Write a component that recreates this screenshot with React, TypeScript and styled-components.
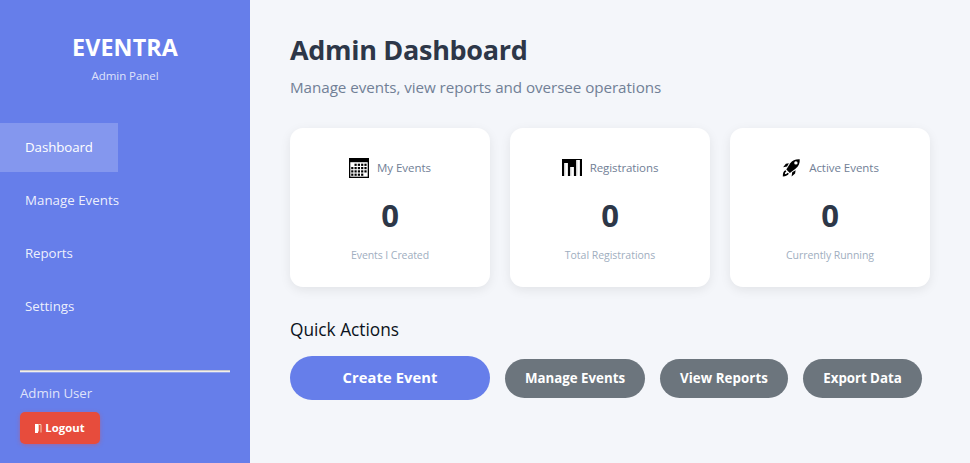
import React from "react";
import styled, { createGlobalStyle } from "styled-components";

const GlobalStyle = createGlobalStyle`
  * { box-sizing: border-box; }
  body {
    margin: 0;
    background: #f4f6fa;
    font-family: "Open Sans", "Noto Sans", sans-serif;
  }
  h1, h2, p { margin: 0; font-weight: 400; }
  button { font-family: inherit; border: 0; padding: 0; cursor: pointer; }
`;

const Page = styled.div`
  display: flex;
  height: 463px;
  overflow: hidden;
`;

const Sidebar = styled.aside`
  display: flex;
  flex-direction: column;
  flex: 0 0 250px;
  background: #667eea;
  color: #fff;
`;

const Brand = styled.header`
  padding-top: 31px;
  height: 123px;
  text-align: center;
`;

const BrandName = styled.h1`
  font-size: 23.3px;
  line-height: 32px;
  font-weight: 700;
  letter-spacing: 0.1px;
`;

const BrandRole = styled.p`
  margin-top: 4px;
  font-size: 11.5px;
  line-height: 17px;
  letter-spacing: -0.06px;
  color: rgba(255, 255, 255, 0.8);
`;

const Nav = styled.nav`
  display: flex;
  flex-direction: column;
  align-items: flex-start;
  gap: 4px;
`;

const NavItem = styled.button<{ $active?: boolean; $tracking: number }>`
  height: 49px;
  padding: 0 25px;
  background: ${(p) => (p.$active ? "rgba(255, 255, 255, 0.2)" : "transparent")};
  color: ${(p) => (p.$active ? "#fff" : "rgba(255, 255, 255, 0.9)")};
  font-size: 13.3px;
  line-height: 49px;
  letter-spacing: ${(p) => p.$tracking}px;
  white-space: nowrap;
`;

const Account = styled.footer`
  display: flex;
  flex-direction: column;
  align-items: flex-start;
  margin-top: auto;
  padding: 0 20px 19px;
`;

const Divider = styled.div`
  align-self: stretch;
  height: 3px;
  background: linear-gradient(#cbcacb 1px, #f3f0ea 1px 2px, #91a3ef 2px);
`;

const UserName = styled.p`
  margin: 10px 0 9px;
  font-size: 13.3px;
  line-height: 20px;
  letter-spacing: -0.07px;
  color: rgba(255, 255, 255, 0.8);
`;

const LogoutButton = styled.button`
  display: flex;
  align-items: center;
  justify-content: center;
  gap: 3px;
  width: 80px;
  height: 32px;
  border-radius: 5px;
  background: #e74c3c;
  box-shadow: 0 1px 4px rgba(231, 76, 60, 0.4);
  color: #fff;
  font-size: 11.3px;
  font-weight: 700;
  line-height: 32px;
  letter-spacing: 0.1px;
`;

const Main = styled.main`
  flex: 1;
  padding: 31px 40px 0;
`;

const Title = styled.h1`
  font-size: 27px;
  line-height: 38px;
  font-weight: 700;
  letter-spacing: -0.31px;
  color: #2d3748;
`;

const Subtitle = styled.p`
  margin-top: 7px;
  font-size: 15.2px;
  line-height: 22px;
  letter-spacing: -0.055px;
  color: #718096;
`;

const Cards = styled.section`
  display: grid;
  grid-template-columns: repeat(3, 200px);
  gap: 20px;
  margin-top: 30px;
`;

const Card = styled.article`
  display: flex;
  flex-direction: column;
  align-items: center;
  height: 159px;
  padding-top: 28px;
  border-radius: 13px;
  background: #fff;
  box-shadow: 0 3px 11px rgba(0, 0, 0, 0.08);
`;

const CardHead = styled.div`
  display: flex;
  align-items: center;
  gap: 8px;
  height: 24px;
  svg { display: block; }
`;

const CardLabel = styled.span<{ $tracking: number }>`
  font-size: 11.5px;
  line-height: 24px;
  letter-spacing: ${(p) => p.$tracking}px;
  color: #718096;
`;

const CardValue = styled.p`
  margin-top: 14px;
  font-size: 31px;
  line-height: 42px;
  font-weight: 700;
  color: #2d3748;
`;

const CardNote = styled.p<{ $tracking: number }>`
  margin-top: 11px;
  font-size: 10.5px;
  line-height: 16px;
  letter-spacing: ${(p) => p.$tracking}px;
  color: #a0aec0;
`;

const SectionTitle = styled.h2`
  margin-top: 31px;
  font-size: 17.3px;
  line-height: 24px;
  letter-spacing: -0.02px;
  color: #0b1220;
`;

const Actions = styled.div`
  display: flex;
  align-items: center;
  gap: 15px;
  margin-top: 14px;
`;

const PrimaryAction = styled.button`
  width: 200px;
  height: 44px;
  padding-bottom: 2px;
  border-radius: 22px;
  background: #667eea;
  color: #fff;
  font-size: 14.7px;
  line-height: 42px;
  font-weight: 700;
  letter-spacing: 0.1px;
`;

const SecondaryAction = styled.button<{ $width: number; $tracking: number }>`
  width: ${(p) => p.$width}px;
  height: 39px;
  border-radius: 20px;
  background: #6c757d;
  color: #fff;
  font-size: 13.3px;
  line-height: 39px;
  font-weight: 700;
  letter-spacing: ${(p) => p.$tracking}px;
  white-space: nowrap;
`;

const DoorIcon = () => (
  <svg width="7" height="9" viewBox="0 0 7 9">
    <path d="M0 0h3v9H0z" fill="#fff" />
    <path d="M3 .5h3v8M3.5 1v6.5" fill="none" stroke="#f6d9b8" strokeWidth=".9" />
  </svg>
);

const cells = [0, 1, 2, 3].flatMap((row) =>
  [0, 1, 2, 3, 4]
    .filter((col) => !(row === 0 && col === 0) && !(row === 3 && col === 4))
    .map((col) => ({ row, col }))
);

const CalendarIcon = () => (
  <svg width="20" height="20" viewBox="0 0 20 20">
    <path d="M0 0h20v20H0z" />
    <path d="M1.3 4.200h17.4v14.500H1.3z" fill="#fff" />
    {cells.map(({ row, col }) => (
      <rect
        key={`${row}-${col}`}
        x={2.2 + col * 3.3}
        y={5.7 + row * 3.3}
        width="2.2"
        height="2.2"
      />
    ))}
  </svg>
);

const ChartIcon = () => (
  <svg width="20" height="20" viewBox="0 0 20 20">
    <path d="M0 1h20v17H0z" />
    <path d="M2.2 5h3.7v13H2.2zM8.2 9h3.7v9H8.2zM14.2 2h3.7v16h-3.7z" fill="#fff" />
    <path d="M3.3 5.5v12M9.3 9.5v8.5M15.3 2.5v15" stroke="#ddd" strokeWidth=".7" />
  </svg>
);

const RocketIcon = () => (
  <svg width="20" height="20" viewBox="0 0 20 20">
    <path d="M18.7 1.2C14.5 1 11.3 2.3 9.2 5.200L5.300 11.600l3.500 3.400 5.700-4.300C17.700 8.200 19 5.200 18.700 1.200z" />
    <circle cx="14.9" cy="4.9" r="1.7" fill="#fff" />
    <path d="M7.9 5.200 4.900 5.700 2.100 9.200l4-.7zM14.600 12.200l-.5 3.200-3.500 3 .6-4.100z" />
    <path d="M4.500 12.300c-1.900.4-2.700 2.900-2.700 6.100 3.200 0 5.400-.9 6-2.800l-1.300-.8c-.5 1-1.500 1.300-2.600 1.400.1-1.100.4-2 1.500-2.600z" />
  </svg>
);

const stats = [
  { icon: <CalendarIcon />, label: "My Events", lt: -0.04, note: "Events I Created", nt: -0.08 },
  { icon: <ChartIcon />, label: "Registrations", lt: -0.1, note: "Total Registrations", nt: -0.02 },
  { icon: <RocketIcon />, label: "Active Events", lt: -0.04, note: "Currently Running", nt: -0.06 },
];

export default function App() {
  return (
    <Page>
      <GlobalStyle />
      <Sidebar>
        <Brand>
          <BrandName>EVENTRA</BrandName>
          <BrandRole>Admin Panel</BrandRole>
        </Brand>
        <Nav>
          <NavItem $active $tracking={-0.08}>Dashboard</NavItem>
          <NavItem $tracking={0.02}>Manage Events</NavItem>
          <NavItem $tracking={-0.1}>Reports</NavItem>
          <NavItem $tracking={0.02}>Settings</NavItem>
        </Nav>
        <Account>
          <Divider />
          <UserName>Admin User</UserName>
          <LogoutButton>
            <DoorIcon />
            Logout
          </LogoutButton>
        </Account>
      </Sidebar>
      <Main>
        <Title>Admin Dashboard</Title>
        <Subtitle>Manage events, view reports and oversee operations</Subtitle>
        <Cards>
          {stats.map((s) => (
            <Card key={s.label}>
              <CardHead>
                {s.icon}
                <CardLabel $tracking={s.lt}>{s.label}</CardLabel>
              </CardHead>
              <CardValue>0</CardValue>
              <CardNote $tracking={s.nt}>{s.note}</CardNote>
            </Card>
          ))}
        </Cards>
        <SectionTitle>Quick Actions</SectionTitle>
        <Actions>
          <PrimaryAction>Create Event</PrimaryAction>
          <SecondaryAction $width={140} $tracking={-0.01}>Manage Events</SecondaryAction>
          <SecondaryAction $width={128} $tracking={0.08}>View Reports</SecondaryAction>
          <SecondaryAction $width={119} $tracking={-0.04}>Export Data</SecondaryAction>
        </Actions>
      </Main>
    </Page>
  );
}
